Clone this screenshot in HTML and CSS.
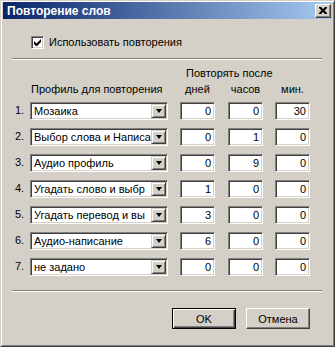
FILE: index.html
```html
<!DOCTYPE html>
<html lang="ru">
<head>
<meta charset="utf-8">
<title>Повторение слов</title>
<link rel="stylesheet" href="styles.css">
</head>
<body>
<div class="window">
  <div class="titlebar">
    <span class="title">Повторение слов</span>
    <span class="close"><svg width="8" height="7" viewBox="0 0 8 7"><path d="M0 0h2l2 2 2-2h2v1L5.5 3.5 8 6v1H6L4 5 2 7H0V6l2.5-2.5L0 1z" fill="#000"/></svg></span>
  </div>
  <div class="content">
    <div class="check-row">
      <span class="checkbox"><svg width="7" height="7" viewBox="0 0 7 7"><path d="M0 2v3l2 2h1l4-4V0L2.5 4.5z" fill="#000"/></svg></span>
      <span class="check-label">Использовать повторения</span>
    </div>
    <div class="sep"></div>
    <div class="head head1">
      <span></span><span></span>
      <span class="after">Повторять после</span>
    </div>
    <div class="head head2">
      <span></span>
      <span class="profile-h">Профиль для повторения</span>
      <span class="unit">дней</span>
      <span class="unit">часов</span>
      <span class="unit">мин.</span>
    </div>
    <div class="rows">
      <div class="row"><span class="num">1.</span><div class="combo"><span class="combo-text">Мозаика</span><span class="drop"><i class="tri"></i></span></div><span class="edit">0</span><span class="edit">0</span><span class="edit">30</span></div>
      <div class="row"><span class="num">2.</span><div class="combo"><span class="combo-text">Выбор слова и Написа</span><span class="drop"><i class="tri"></i></span></div><span class="edit">0</span><span class="edit">1</span><span class="edit">0</span></div>
      <div class="row"><span class="num">3.</span><div class="combo"><span class="combo-text">Аудио профиль</span><span class="drop"><i class="tri"></i></span></div><span class="edit">0</span><span class="edit">9</span><span class="edit">0</span></div>
      <div class="row"><span class="num">4.</span><div class="combo"><span class="combo-text">Угадать слово и выбр</span><span class="drop"><i class="tri"></i></span></div><span class="edit">1</span><span class="edit">0</span><span class="edit">0</span></div>
      <div class="row"><span class="num">5.</span><div class="combo"><span class="combo-text">Угадать перевод и вы</span><span class="drop"><i class="tri"></i></span></div><span class="edit">3</span><span class="edit">0</span><span class="edit">0</span></div>
      <div class="row"><span class="num">6.</span><div class="combo"><span class="combo-text">Аудио-написание</span><span class="drop"><i class="tri"></i></span></div><span class="edit">6</span><span class="edit">0</span><span class="edit">0</span></div>
      <div class="row"><span class="num">7.</span><div class="combo"><span class="combo-text">не задано</span><span class="drop"><i class="tri"></i></span></div><span class="edit">0</span><span class="edit">0</span><span class="edit">0</span></div>
    </div>
    <div class="sep sep-bottom"></div>
    <div class="buttons">
      <span class="btn btn-default">OK</span>
      <span class="btn">Отмена</span>
    </div>
  </div>
</div>
</body>
</html>
```

FILE: styles.css
```css
html, body {
  margin: 0;
  padding: 0;
  background: #d4d0c8;
}
body {
  font-family: "Liberation Sans", Arial, sans-serif;
  font-size: 11px;
  color: #000;
}
.window {
  width: 335px;
  height: 347px;
  box-sizing: border-box;
  background: #d4d0c8;
  border: 1px solid;
  border-color: #d4d0c8 #404040 #404040 #d4d0c8;
  box-shadow: inset 1px 1px #fff, inset -1px -1px #808080;
  padding: 1px 2px 2px 2px;
  display: flex;
  flex-direction: column;
}
.titlebar {
  height: 17px;
  flex: none;
  background: linear-gradient(to right, #0a246a, #a6caf0);
  display: flex;
  align-items: center;
  justify-content: space-between;
  padding: 0 1px 0 4px;
}
.title {
  color: #fff;
  font-weight: bold;
  font-size: 12px;
  line-height: 14px;
}
.close {
  width: 16px;
  height: 14px;
  box-sizing: border-box;
  background: #d4d0c8;
  border: 1px solid;
  border-color: #fff #404040 #404040 #fff;
  box-shadow: inset -1px -1px #808080;
  display: flex;
  align-items: center;
  justify-content: center;
  padding: 0 1px 1px 0;
}
.close svg { display: block; }
.content {
  flex: 1;
  padding: 0 10px 0 9px;
  display: flex;
  flex-direction: column;
}
.check-row {
  margin-top: 17px;
  padding-left: 19px;
  height: 13px;
  display: flex;
  align-items: center;
  gap: 5px;
}
.checkbox {
  width: 13px;
  height: 13px;
  box-sizing: border-box;
  background: #fff;
  border: 1px solid;
  border-color: #808080 #fff #fff #808080;
  box-shadow: inset 1px 1px #404040, inset -1px -1px #d4d0c8;
  display: flex;
  align-items: center;
  justify-content: center;
}
.checkbox svg { display: block; }
.check-label { line-height: 13px; }
.sep {
  margin-top: 9px;
  border-top: 1px solid #808080;
  border-bottom: 1px solid #fff;
}
.head, .row {
  display: grid;
  grid-template-columns: 18px 138px 47px 48px 47px;
  line-height: 13px;
}
.head1 { margin-top: 7px; }
.head2 { margin-top: 3px; }
.after {
  grid-column: 3 / 6;
  padding-left: 18px;
  white-space: nowrap;
}
.profile-h {
  padding-left: 1px;
  white-space: nowrap;
}
.unit {
  width: 35px;
  justify-self: end;
  text-align: center;
}
.rows {
  margin-top: 6px;
  display: flex;
  flex-direction: column;
  gap: 8px;
}
.row {
  height: 18px;
  align-items: center;
}
.num {
  padding-left: 3px;
  margin-top: -2px;
}
.combo, .edit {
  height: 18px;
  box-sizing: border-box;
  background: #fff;
  border: 1px solid;
  border-color: #808080 #fff #fff #808080;
  box-shadow: inset 1px 1px #404040, inset -1px -1px #d4d0c8;
}
.combo {
  display: flex;
  align-items: center;
  padding: 1px;
}
.combo-text {
  flex: 1;
  padding-left: 2px;
  white-space: nowrap;
  overflow: hidden;
}
.drop {
  width: 15px;
  height: 14px;
  flex: none;
  box-sizing: border-box;
  background: #d4d0c8;
  border: 1px solid;
  border-color: #d4d0c8 #404040 #404040 #d4d0c8;
  box-shadow: inset 1px 1px #fff, inset -1px -1px #808080;
  display: flex;
  align-items: center;
  justify-content: center;
}
.tri {
  width: 0;
  height: 0;
  border-left: 3.5px solid transparent;
  border-right: 3.5px solid transparent;
  border-top: 4px solid #000;
}
.edit {
  width: 35px;
  justify-self: end;
  text-align: right;
  padding-right: 3px;
  line-height: 16px;
}
.sep-bottom { margin-top: 14px; }
.buttons {
  margin-top: 16px;
  display: flex;
  justify-content: flex-end;
  gap: 10px;
  padding-right: 12px;
}
.btn {
  width: 64px;
  height: 21px;
  box-sizing: border-box;
  background: #d4d0c8;
  border: 1px solid;
  border-color: #fff #404040 #404040 #fff;
  box-shadow: inset -1px -1px #808080;
  display: flex;
  align-items: center;
  justify-content: center;
}
.btn-default {
  border-color: #000;
  box-shadow: inset 1px 1px #fff, inset -1px -1px #404040, inset -2px -2px #808080;
}
```
